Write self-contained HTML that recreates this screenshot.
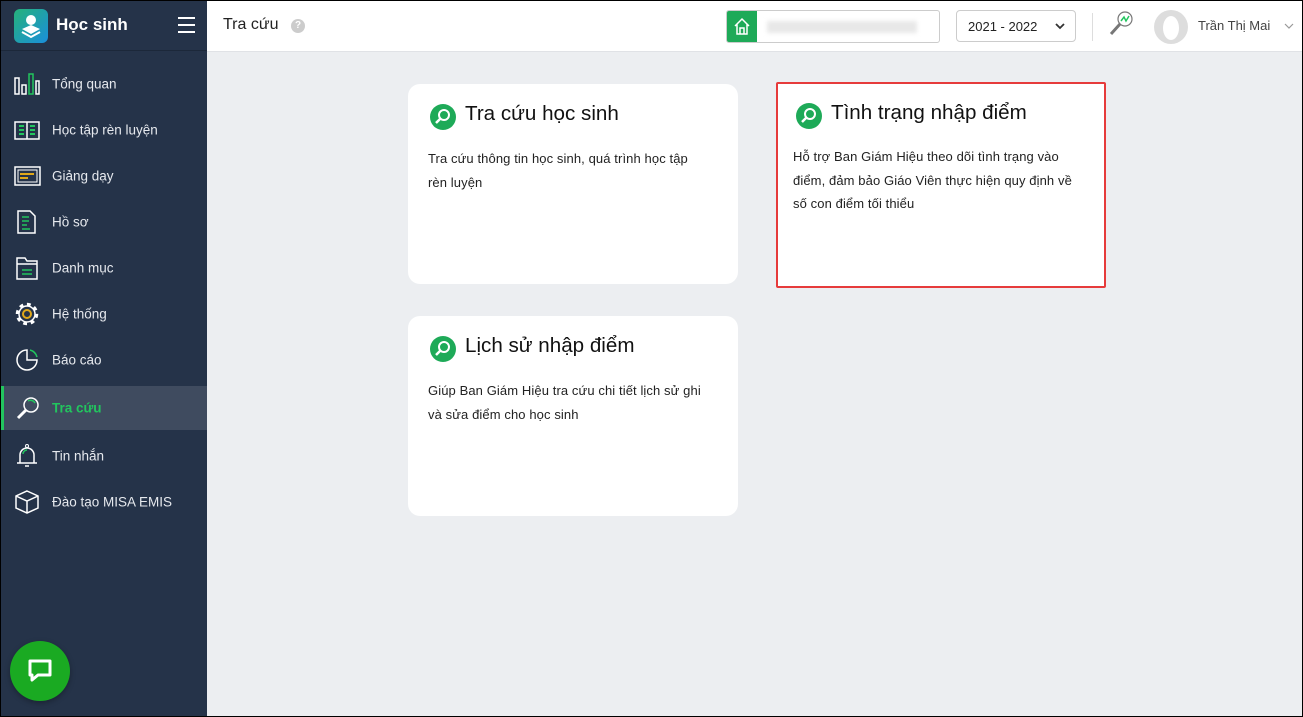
<!DOCTYPE html>
<html><head><meta charset="utf-8"><style>
*{box-sizing:border-box;margin:0;padding:0}
body{width:1303px;height:717px;overflow:hidden;font-family:"Liberation Sans",sans-serif;background:#000;position:relative}
#sb{position:absolute;left:1px;top:1px;width:206px;height:715px;background:#253349}
#main{position:absolute;left:207px;top:1px;width:1095px;height:715px;background:#eceef1}
#hdr{position:absolute;left:0;top:0;width:1095px;height:51px;background:#fff;border-bottom:1px solid #e0e2e6}
.nav{position:absolute;left:0;width:206px;height:44px;color:#e6e9ee;font-size:13.5px}
.nav span{position:absolute;left:51px;top:50%;transform:translateY(-50%)}
.nav svg{position:absolute;left:12px;top:50%;transform:translateY(-50%)}
.card{position:absolute;background:#fff;border-radius:12px}
.card h2{position:absolute;left:57px;top:18px;font-weight:normal;font-size:20.6px;color:#111;white-space:nowrap}
.card .ic{position:absolute;left:22px;top:20px;width:26px;height:26px;border-radius:50%;background:#1eaa58}
.card p{position:absolute;left:20px;top:63px;width:310px;font-size:13px;line-height:23.5px;color:#222;white-space:nowrap;letter-spacing:0.1px}
</style></head><body>
<div id="sb">
 <div style="position:absolute;left:13px;top:8px;width:34px;height:34px;border-radius:6px;background:linear-gradient(135deg,#26b27a,#1a8fdc)">
  <svg width="34" height="34"><circle cx="17" cy="11" r="5" fill="#fff"/><path d="M8 20 L17 16 L26 20 L17 25Z" fill="#fff"/><path d="M8 23 L17 28 L26 23" stroke="#fff" stroke-width="2" fill="none"/></svg>
 </div>
 <div style="position:absolute;left:55px;top:14px;color:#fff;font-size:17px;font-weight:bold">Học sinh</div>
 <div style="position:absolute;left:177px;top:16px;width:17px">
  <div style="height:2px;background:#fff;margin-bottom:5px"></div><div style="height:2px;background:#fff;margin-bottom:5px"></div><div style="height:2px;background:#fff"></div></div>
 <div style="position:absolute;left:0;top:49px;width:206px;height:1px;background:#1c283a"></div>
 <div class="nav" style="top:61px"><svg width="28" height="24"><rect x="2" y="6" width="4" height="16" fill="none" stroke="#fff" stroke-width="1.5"/><rect x="9" y="13" width="4" height="9" fill="none" stroke="#fff" stroke-width="1.5"/><rect x="16" y="2" width="4" height="20" fill="none" stroke="#22c55e" stroke-width="1.5"/><rect x="23" y="9" width="3" height="13" fill="none" stroke="#fff" stroke-width="1.5"/></svg><span>Tổng quan</span></div>
 <div class="nav" style="top:107px"><svg width="28" height="24"><path d="M2 4h24v17H2z M14 4v17" fill="none" stroke="#fff" stroke-width="1.5"/><path d="M6 8h5M6 12h5M6 16h5M17 8h5M17 12h5M17 16h5" stroke="#22c55e" stroke-width="2"/></svg><span>Học tập rèn luyện</span></div>
 <div class="nav" style="top:153px"><svg width="28" height="24"><rect x="2" y="3" width="25" height="18" fill="none" stroke="#fff" stroke-width="1.5"/><rect x="5" y="6" width="19" height="12" fill="none" stroke="#fff" stroke-width="1"/><path d="M7 10h14M7 14h8" stroke="#e0a81a" stroke-width="2"/></svg><span>Giảng dạy</span></div>
 <div class="nav" style="top:199px"><svg width="28" height="24"><path d="M5 1h12l5 5v17H5z" fill="none" stroke="#fff" stroke-width="1.5"/><path d="M9 7h7M9 11h7M9 15h5M9 19h8" stroke="#22c55e" stroke-width="1.5"/></svg><span>Hồ sơ</span></div>
 <div class="nav" style="top:245px"><svg width="28" height="24"><path d="M4 2h8l2 3h10v18H4z M4 8h20" fill="none" stroke="#fff" stroke-width="1.5"/><path d="M9 14h10M9 18h10" stroke="#22c55e" stroke-width="1.5"/></svg><span>Danh mục</span></div>
 <div class="nav" style="top:291px"><svg width="28" height="28"><circle cx="14" cy="14" r="9.5" fill="none" stroke="#fff" stroke-width="3.5" stroke-dasharray="3.7 3.7"/><circle cx="14" cy="14" r="8" fill="#253349" stroke="#fff" stroke-width="1.5"/><circle cx="14" cy="14" r="4" fill="none" stroke="#e0a81a" stroke-width="2"/></svg><span>Hệ thống</span></div>
 <div class="nav" style="top:337px"><svg width="28" height="26"><path d="M14 3 A10 10 0 1 0 24 13 H14Z" fill="none" stroke="#fff" stroke-width="1.5"/><path d="M17 3 A10 10 0 0 1 24 10" fill="none" stroke="#22c55e" stroke-width="1.5"/></svg><span>Báo cáo</span></div>
 <div class="nav" style="top:385px;background:#3f4b5f;border-left:3px solid #22c55e"><svg width="28" height="26" style="left:10px"><circle cx="17" cy="10" r="7" fill="none" stroke="#fff" stroke-width="1.5"/><path d="M14 6a5 5 0 0 1 7 2" stroke="#22c55e" stroke-width="1.5" fill="none"/><path d="M12 15 L4 23" stroke="#fff" stroke-width="3"/></svg><span style="left:48px;color:#22c55e;font-weight:bold">Tra cứu</span></div>
 <div class="nav" style="top:433px"><svg width="28" height="26"><path d="M7 20 V12 a7 7 0 0 1 14 0 V20 H4 h20" fill="none" stroke="#fff" stroke-width="1.5"/><path d="M10 11a4 4 0 0 1 4-4" stroke="#22c55e" stroke-width="1.5" fill="none"/><circle cx="14" cy="3" r="1.5" fill="none" stroke="#fff"/><path d="M12 23h4" stroke="#fff" stroke-width="1.5"/></svg><span>Tin nhắn</span></div>
 <div class="nav" style="top:479px"><svg width="28" height="26"><path d="M14 2 L25 7 V19 L14 24 L3 19 V7Z M3 7 L14 12 L25 7 M14 12V24" fill="none" stroke="#fff" stroke-width="1.5"/></svg><span>Đào tạo MISA EMIS</span></div>
 <div style="position:absolute;left:9px;top:640px;width:60px;height:60px;border-radius:50%;background:#1aaa22;box-shadow:0 2px 6px rgba(0,0,0,.3)">
  <svg width="60" height="60"><path d="M20 20h20v14H28l-6 5v-5h-2z" fill="none" stroke="#fff" stroke-width="3" stroke-linejoin="round"/></svg></div>
</div>
<div id="main">
 <div id="hdr">
  <div style="position:absolute;left:16px;top:15px;font-size:16px;color:#222">Tra cứu</div>
  <div style="position:absolute;left:84px;top:18px;width:14px;height:14px;border-radius:50%;background:#ccc;color:#fff;font-size:10px;text-align:center;line-height:14px;font-weight:bold">?</div>
  <div style="position:absolute;left:519px;top:9px;width:214px;height:33px;border:1px solid #ccc;border-radius:3px;background:#fff;overflow:hidden">
   <div style="position:absolute;left:0;top:0;width:30px;height:33px;background:#1eaa58"><svg width="30" height="31"><path d="M8 15 L15 8 L22 15 M10 13 V23 H20 V13 M13 23 V17 H17 V23" fill="none" stroke="#fff" stroke-width="1.5"/></svg></div>
   <div style="position:absolute;left:40px;top:10px;width:150px;height:12px;background:#e8e8e8;filter:blur(2px)"></div></div>
  <div style="position:absolute;left:749px;top:9px;width:120px;height:32px;border:1px solid #ccc;border-radius:4px;font-size:13px;color:#222;padding:8px 0 0 11px">2021 - 2022<svg style="position:absolute;right:10px;top:11px" width="10" height="8"><path d="M1 2 L5 6 L9 2" stroke="#333" stroke-width="1.8" fill="none"/></svg></div>
  <div style="position:absolute;left:885px;top:12px;width:1px;height:28px;background:#ddd"></div>
  <svg style="position:absolute;left:900px;top:9px" width="28" height="28"><circle cx="18" cy="9" r="7" fill="none" stroke="#777" stroke-width="1.2"/><path d="M14 11 L17 7 L19 11 L22 6" stroke="#22c55e" stroke-width="1.5" fill="none"/><path d="M13 14 L4 24" stroke="#777" stroke-width="3"/></svg>
  <div style="position:absolute;left:947px;top:9px;width:34px;height:34px;border-radius:50%;background:#ddd"><div style="position:absolute;left:9px;top:6px;width:16px;height:24px;border-radius:50%;background:#fff"></div></div>
  <div style="position:absolute;left:991px;top:17px;font-size:13px;color:#444">Trần Thị Mai</div>
  <svg style="position:absolute;left:1077px;top:22px" width="10" height="7"><path d="M1 1 L5 5 L9 1" stroke="#999" stroke-width="1.2" fill="none"/></svg>
 </div>
 <div class="card" style="left:201px;top:83px;width:330px;height:200px"><div class="ic"><svg width="26" height="26"><circle cx="14" cy="11" r="5" fill="none" stroke="#fff" stroke-width="2"/><path d="M10 15 L6 19" stroke="#fff" stroke-width="2.5"/></svg></div><h2>Tra cứu học sinh</h2><p>Tra cứu thông tin học sinh, quá trình học tập<br>rèn luyện</p></div>
 <div class="card" style="left:569px;top:81px;width:330px;height:206px;border:2px solid #e63b3b;border-radius:2px"><div class="ic" style="left:18px;top:19px"><svg width="26" height="26"><circle cx="14" cy="11" r="5" fill="none" stroke="#fff" stroke-width="2"/><path d="M10 15 L6 19" stroke="#fff" stroke-width="2.5"/></svg></div><h2 style="left:53px;top:17px">Tình trạng nhập điểm</h2><p style="left:15px;top:61px">Hỗ trợ Ban Giám Hiệu theo dõi tình trạng vào<br>điểm, đảm bảo Giáo Viên thực hiện quy định về<br>số con điểm tối thiểu</p></div>
 <div class="card" style="left:201px;top:315px;width:330px;height:200px"><div class="ic"><svg width="26" height="26"><circle cx="14" cy="11" r="5" fill="none" stroke="#fff" stroke-width="2"/><path d="M10 15 L6 19" stroke="#fff" stroke-width="2.5"/></svg></div><h2>Lịch sử nhập điểm</h2><p>Giúp Ban Giám Hiệu tra cứu chi tiết lịch sử ghi<br>và sửa điểm cho học sinh</p></div>
</div>
</body></html>
